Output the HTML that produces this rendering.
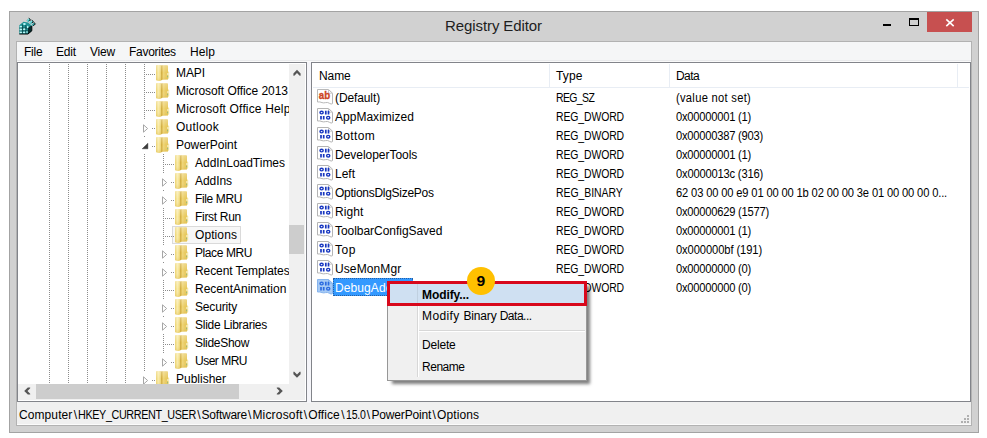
<!DOCTYPE html>
<html lang="en">
<head>
<meta charset="utf-8">
<title>Registry Editor</title>
<style>
html,body{margin:0;padding:0;background:#fff;}
body{width:987px;height:438px;position:relative;overflow:hidden;font-family:"Liberation Sans",sans-serif;font-size:12px;color:#000;}
.a{position:absolute;}
.t{position:absolute;white-space:pre;}
svg{position:absolute;overflow:visible;}
</style>
</head>
<body>
<div class="window">
<div class="a" style="left:9px;top:11px;width:970px;height:422px;background:#d1d1d1;box-sizing:border-box;border:1px solid #a3a3a3;"></div>
<div class="a" style="left:16px;top:41px;width:956px;height:385px;background:#f0f0f0;box-sizing:border-box;border:1px solid #b2b2b2;"></div>
<div class="titlebar">
<svg style="left:19px;top:18px" width="17" height="17" viewBox="0 0 17 17">
<path d="M0.3 7.2 L4.5 3.8 L9 4.6 L12.6 7.6 L12.6 13 L9 16 L0.3 16 Z" fill="#1f9496"/>
<path d="M9 9.5 L12.6 7.6 L12.6 13 L9 16 Z" fill="#062c2e"/>
<path d="M3.6 6.5 L3.6 15.5 M6.8 7 L6.8 15.5 M0.5 10.1 L8.8 10.1 M0.5 12.9 L9 12.9" stroke="#0a4446" stroke-width="0.8" fill="none"/>
<path d="M0.3 16 L9 16 L12.8 12.8 L12.8 8" stroke="#000" stroke-width="1" fill="none"/>
<g fill="#baf7f7">
<ellipse cx="1.9" cy="8.6" rx="1.2" ry="0.9"/><ellipse cx="5.4" cy="6" rx="1.4" ry="0.9"/>
<ellipse cx="1.9" cy="11.5" rx="1.2" ry="0.9"/><ellipse cx="5.2" cy="11.3" rx="1.2" ry="1"/>
<ellipse cx="1.9" cy="14.4" rx="1.2" ry="0.8"/><ellipse cx="5.1" cy="14.4" rx="1.2" ry="0.8"/><ellipse cx="8" cy="14" rx="0.9" ry="0.8"/>
<ellipse cx="8.7" cy="9" rx="0.8" ry="1.3"/>
</g>
<path d="M7.4 2.6 L9.8 0.2 L11.6 1.8 L9.4 4.2 Z" fill="#37b3b5"/>
<path d="M10.4 4.6 L12.8 2.2 L14.4 3.6 L12 6.2 Z" fill="#37b3b5"/>
<path d="M12.6 7 L14.8 4.4 L16.4 5.8 L14 8 Z" fill="#2a9fa1"/>
<path d="M9.8 0.2 L11.6 1.8 L10.4 3 M12.8 2.2 L14.4 3.6 L13.2 5 M14.8 4.4 L16.4 5.8 L14.2 8" stroke="#000" stroke-width="0.9" fill="none"/>
<path d="M8.4 2.4 L9.8 1 M11.2 4.6 L12.6 3.2" stroke="#c9fbfb" stroke-width="0.9" fill="none"/>
</svg>
<div class="a" style="left:927px;top:12px;width:45px;height:20px;background:#c75050;"></div>
<svg style="left:927px;top:12px" width="45" height="20" viewBox="0 0 45 20"><path d="M19.3 7.3 L26.7 14.2 M26.7 7.3 L19.3 14.2" stroke="#fff" stroke-width="1.6" fill="none"/></svg>
<div class="a" style="left:883px;top:24px;width:8px;height:2px;background:#000;"></div>
<div class="a" style="left:909px;top:18px;width:10px;height:8px;box-sizing:border-box;border:1px solid #000;border-top-width:2px;"></div>
<div class="t" style="left:445px;top:15px;line-height:22px;font-size:15px;letter-spacing:-0.09px;color:#1e1e1e;">Registry Editor</div>
</div>
<div class="menubar">
<div class="a" style="left:17px;top:42px;width:954px;height:20px;background:#f5f6f7;box-sizing:border-box;border-bottom:1px solid #fafafa;"></div>
<div class="a" style="left:17px;top:60px;width:954px;height:1px;background:#e9eaec;"></div>
<div class="t" style="left:24px;top:42px;line-height:20px;letter-spacing:-0.26px;">File</div>
<div class="t" style="left:56px;top:42px;line-height:20px;letter-spacing:-0.17px;">Edit</div>
<div class="t" style="left:90px;top:42px;line-height:20px;letter-spacing:-0.25px;">View</div>
<div class="t" style="left:129px;top:42px;line-height:20px;letter-spacing:-0.28px;">Favorites</div>
<div class="t" style="left:190px;top:42px;line-height:20px;letter-spacing:0.08px;">Help</div>
</div>
<svg width="0" height="0" style="left:0;top:0"><defs><linearGradient id="fg" x1="0" y1="0" x2="1" y2="0"><stop offset="0.042" stop-color="#efd87c"/><stop offset="0.125" stop-color="#f5e394"/><stop offset="0.208" stop-color="#f8eaa8"/><stop offset="0.292" stop-color="#f5e394"/><stop offset="0.375" stop-color="#efd87a"/><stop offset="0.458" stop-color="#d2ae44"/><stop offset="0.542" stop-color="#e2c256"/><stop offset="0.625" stop-color="#eed376"/><stop offset="0.708" stop-color="#ecd06c"/><stop offset="0.792" stop-color="#e9cb62"/><stop offset="0.875" stop-color="#e8c95e"/><stop offset="0.958" stop-color="#e6c658"/></linearGradient><linearGradient id="fv" x1="0" y1="0" x2="0" y2="1"><stop offset="0" stop-color="#fff" stop-opacity="0.3"/><stop offset="0.5" stop-color="#fff" stop-opacity="0"/><stop offset="1" stop-color="#c89a10" stop-opacity="0.25"/></linearGradient></defs></svg>
<div class="tree-pane">
<div class="a" style="left:17px;top:62px;width:290px;height:340px;background:#fff;box-sizing:border-box;border:1px solid #82848a;"></div>
<div class="a" style="left:49px;top:64px;width:1px;height:320px;background-image:linear-gradient(to bottom,#8c8c8c 50%,transparent 50%);background-size:1px 2px;"></div>
<div class="a" style="left:68px;top:64px;width:1px;height:320px;background-image:linear-gradient(to bottom,#8c8c8c 50%,transparent 50%);background-size:1px 2px;"></div>
<div class="a" style="left:87px;top:64px;width:1px;height:320px;background-image:linear-gradient(to bottom,#8c8c8c 50%,transparent 50%);background-size:1px 2px;"></div>
<div class="a" style="left:106px;top:64px;width:1px;height:320px;background-image:linear-gradient(to bottom,#8c8c8c 50%,transparent 50%);background-size:1px 2px;"></div>
<div class="a" style="left:125px;top:64px;width:1px;height:320px;background-image:linear-gradient(to bottom,#8c8c8c 50%,transparent 50%);background-size:1px 2px;"></div>
<div class="a" style="left:144px;top:64px;width:1px;height:320px;background-image:linear-gradient(to bottom,#8c8c8c 50%,transparent 50%);background-size:1px 2px;"></div>
<div class="a" style="left:163px;top:154px;width:1px;height:216px;background-image:linear-gradient(to bottom,#8c8c8c 50%,transparent 50%);background-size:1px 2px;"></div>
<div class="a" style="left:144px;top:74px;width:11px;height:1px;background-image:linear-gradient(to right,#8c8c8c 50%,transparent 50%);background-size:2px 1px;"></div>
<svg style="left:156px;top:65px" width="14" height="16" viewBox="0 0 14 16">
<path d="M12 6.2 L13.2 7 L13.2 13.2 L12 14 Z" fill="#f3e4a2"/>
<path d="M0 1 Q0 0 1 0 L4.6 0 L5.2 0.6 L6 0.2 L11 0.2 Q12 0.2 12 1.2 L12 14.6 L6 14.8 L5 15.6 Q3 16.2 1 15.6 Q0 15.4 0 14.6 Z" fill="url(#fg)"/>
<path d="M0 1 Q0 0 1 0 L4.6 0 L5.2 0.6 L6 0.2 L11 0.2 Q12 0.2 12 1.2 L12 14.6 L6 14.8 L5 15.6 Q3 16.2 1 15.6 Q0 15.4 0 14.6 Z" fill="url(#fv)"/>
<rect x="11.4" y="8" width="1" height="2" fill="#fbf6dc"/>
<rect x="11" y="10.8" width="1.1" height="1.5" fill="#9ab97c"/>
</svg>
<div class="t" style="left:176px;top:64px;line-height:18px;letter-spacing:-0.09px;">MAPI</div>
<div class="a" style="left:144px;top:92px;width:11px;height:1px;background-image:linear-gradient(to right,#8c8c8c 50%,transparent 50%);background-size:2px 1px;"></div>
<svg style="left:156px;top:83px" width="14" height="16" viewBox="0 0 14 16">
<path d="M12 6.2 L13.2 7 L13.2 13.2 L12 14 Z" fill="#f3e4a2"/>
<path d="M0 1 Q0 0 1 0 L4.6 0 L5.2 0.6 L6 0.2 L11 0.2 Q12 0.2 12 1.2 L12 14.6 L6 14.8 L5 15.6 Q3 16.2 1 15.6 Q0 15.4 0 14.6 Z" fill="url(#fg)"/>
<path d="M0 1 Q0 0 1 0 L4.6 0 L5.2 0.6 L6 0.2 L11 0.2 Q12 0.2 12 1.2 L12 14.6 L6 14.8 L5 15.6 Q3 16.2 1 15.6 Q0 15.4 0 14.6 Z" fill="url(#fv)"/>
<rect x="11.4" y="8" width="1" height="2" fill="#fbf6dc"/>
<rect x="11" y="10.8" width="1.1" height="1.5" fill="#9ab97c"/>
</svg>
<div class="t" style="left:176px;top:82px;line-height:18px;letter-spacing:-0.06px;">Microsoft Office 2013</div>
<div class="a" style="left:144px;top:110px;width:11px;height:1px;background-image:linear-gradient(to right,#8c8c8c 50%,transparent 50%);background-size:2px 1px;"></div>
<svg style="left:156px;top:101px" width="14" height="16" viewBox="0 0 14 16">
<path d="M12 6.2 L13.2 7 L13.2 13.2 L12 14 Z" fill="#f3e4a2"/>
<path d="M0 1 Q0 0 1 0 L4.6 0 L5.2 0.6 L6 0.2 L11 0.2 Q12 0.2 12 1.2 L12 14.6 L6 14.8 L5 15.6 Q3 16.2 1 15.6 Q0 15.4 0 14.6 Z" fill="url(#fg)"/>
<path d="M0 1 Q0 0 1 0 L4.6 0 L5.2 0.6 L6 0.2 L11 0.2 Q12 0.2 12 1.2 L12 14.6 L6 14.8 L5 15.6 Q3 16.2 1 15.6 Q0 15.4 0 14.6 Z" fill="url(#fv)"/>
<rect x="11.4" y="8" width="1" height="2" fill="#fbf6dc"/>
<rect x="11" y="10.8" width="1.1" height="1.5" fill="#9ab97c"/>
</svg>
<div class="t" style="left:176px;top:100px;line-height:18px;letter-spacing:0.16px;">Microsoft Office Help</div>
<div class="a" style="left:140px;top:119px;width:9px;height:16px;background:#fff;"></div>
<div class="a" style="left:152px;top:128px;width:3px;height:1px;background-image:linear-gradient(to right,#8c8c8c 50%,transparent 50%);background-size:2px 1px;"></div>
<svg style="left:143px;top:124px" width="6" height="10" viewBox="0 0 6 10"><path d="M0.5 0.8 L4.6 4.5 L0.5 8.2 Z" fill="#fff" stroke="#a6a6a6" stroke-width="1"/></svg>
<svg style="left:156px;top:119px" width="14" height="16" viewBox="0 0 14 16">
<path d="M12 6.2 L13.2 7 L13.2 13.2 L12 14 Z" fill="#f3e4a2"/>
<path d="M0 1 Q0 0 1 0 L4.6 0 L5.2 0.6 L6 0.2 L11 0.2 Q12 0.2 12 1.2 L12 14.6 L6 14.8 L5 15.6 Q3 16.2 1 15.6 Q0 15.4 0 14.6 Z" fill="url(#fg)"/>
<path d="M0 1 Q0 0 1 0 L4.6 0 L5.2 0.6 L6 0.2 L11 0.2 Q12 0.2 12 1.2 L12 14.6 L6 14.8 L5 15.6 Q3 16.2 1 15.6 Q0 15.4 0 14.6 Z" fill="url(#fv)"/>
<rect x="11.4" y="8" width="1" height="2" fill="#fbf6dc"/>
<rect x="11" y="10.8" width="1.1" height="1.5" fill="#9ab97c"/>
</svg>
<div class="t" style="left:176px;top:118px;line-height:18px;letter-spacing:0.23px;">Outlook</div>
<div class="a" style="left:140px;top:137px;width:9px;height:16px;background:#fff;"></div>
<div class="a" style="left:152px;top:146px;width:3px;height:1px;background-image:linear-gradient(to right,#8c8c8c 50%,transparent 50%);background-size:2px 1px;"></div>
<svg style="left:142px;top:143px" width="6" height="6" viewBox="0 0 6 6"><path d="M5.9 0.2 L5.9 5.8 L0.2 5.8 Z" fill="#3c3c3c" stroke="#262626" stroke-width="0.4"/></svg>
<svg style="left:156px;top:137px" width="14" height="16" viewBox="0 0 14 16">
<path d="M12 6.2 L13.2 7 L13.2 13.2 L12 14 Z" fill="#f3e4a2"/>
<path d="M0 1 Q0 0 1 0 L4.6 0 L5.2 0.6 L6 0.2 L11 0.2 Q12 0.2 12 1.2 L12 14.6 L6 14.8 L5 15.6 Q3 16.2 1 15.6 Q0 15.4 0 14.6 Z" fill="url(#fg)"/>
<path d="M0 1 Q0 0 1 0 L4.6 0 L5.2 0.6 L6 0.2 L11 0.2 Q12 0.2 12 1.2 L12 14.6 L6 14.8 L5 15.6 Q3 16.2 1 15.6 Q0 15.4 0 14.6 Z" fill="url(#fv)"/>
<rect x="11.4" y="8" width="1" height="2" fill="#fbf6dc"/>
<rect x="11" y="10.8" width="1.1" height="1.5" fill="#9ab97c"/>
</svg>
<div class="t" style="left:176px;top:136px;line-height:18px;letter-spacing:-0.04px;">PowerPoint</div>
<div class="a" style="left:163px;top:164px;width:11px;height:1px;background-image:linear-gradient(to right,#8c8c8c 50%,transparent 50%);background-size:2px 1px;"></div>
<svg style="left:175px;top:155px" width="14" height="16" viewBox="0 0 14 16">
<path d="M12 6.2 L13.2 7 L13.2 13.2 L12 14 Z" fill="#f3e4a2"/>
<path d="M0 1 Q0 0 1 0 L4.6 0 L5.2 0.6 L6 0.2 L11 0.2 Q12 0.2 12 1.2 L12 14.6 L6 14.8 L5 15.6 Q3 16.2 1 15.6 Q0 15.4 0 14.6 Z" fill="url(#fg)"/>
<path d="M0 1 Q0 0 1 0 L4.6 0 L5.2 0.6 L6 0.2 L11 0.2 Q12 0.2 12 1.2 L12 14.6 L6 14.8 L5 15.6 Q3 16.2 1 15.6 Q0 15.4 0 14.6 Z" fill="url(#fv)"/>
<rect x="11.4" y="8" width="1" height="2" fill="#fbf6dc"/>
<rect x="11" y="10.8" width="1.1" height="1.5" fill="#9ab97c"/>
</svg>
<div class="t" style="left:195px;top:154px;line-height:18px;letter-spacing:-0.02px;">AddInLoadTimes</div>
<div class="a" style="left:159px;top:173px;width:9px;height:16px;background:#fff;"></div>
<div class="a" style="left:171px;top:182px;width:3px;height:1px;background-image:linear-gradient(to right,#8c8c8c 50%,transparent 50%);background-size:2px 1px;"></div>
<svg style="left:162px;top:178px" width="6" height="10" viewBox="0 0 6 10"><path d="M0.5 0.8 L4.6 4.5 L0.5 8.2 Z" fill="#fff" stroke="#a6a6a6" stroke-width="1"/></svg>
<svg style="left:175px;top:173px" width="14" height="16" viewBox="0 0 14 16">
<path d="M12 6.2 L13.2 7 L13.2 13.2 L12 14 Z" fill="#f3e4a2"/>
<path d="M0 1 Q0 0 1 0 L4.6 0 L5.2 0.6 L6 0.2 L11 0.2 Q12 0.2 12 1.2 L12 14.6 L6 14.8 L5 15.6 Q3 16.2 1 15.6 Q0 15.4 0 14.6 Z" fill="url(#fg)"/>
<path d="M0 1 Q0 0 1 0 L4.6 0 L5.2 0.6 L6 0.2 L11 0.2 Q12 0.2 12 1.2 L12 14.6 L6 14.8 L5 15.6 Q3 16.2 1 15.6 Q0 15.4 0 14.6 Z" fill="url(#fv)"/>
<rect x="11.4" y="8" width="1" height="2" fill="#fbf6dc"/>
<rect x="11" y="10.8" width="1.1" height="1.5" fill="#9ab97c"/>
</svg>
<div class="t" style="left:195px;top:172px;line-height:18px;letter-spacing:-0.06px;">AddIns</div>
<div class="a" style="left:159px;top:191px;width:9px;height:16px;background:#fff;"></div>
<div class="a" style="left:171px;top:200px;width:3px;height:1px;background-image:linear-gradient(to right,#8c8c8c 50%,transparent 50%);background-size:2px 1px;"></div>
<svg style="left:162px;top:196px" width="6" height="10" viewBox="0 0 6 10"><path d="M0.5 0.8 L4.6 4.5 L0.5 8.2 Z" fill="#fff" stroke="#a6a6a6" stroke-width="1"/></svg>
<svg style="left:175px;top:191px" width="14" height="16" viewBox="0 0 14 16">
<path d="M12 6.2 L13.2 7 L13.2 13.2 L12 14 Z" fill="#f3e4a2"/>
<path d="M0 1 Q0 0 1 0 L4.6 0 L5.2 0.6 L6 0.2 L11 0.2 Q12 0.2 12 1.2 L12 14.6 L6 14.8 L5 15.6 Q3 16.2 1 15.6 Q0 15.4 0 14.6 Z" fill="url(#fg)"/>
<path d="M0 1 Q0 0 1 0 L4.6 0 L5.2 0.6 L6 0.2 L11 0.2 Q12 0.2 12 1.2 L12 14.6 L6 14.8 L5 15.6 Q3 16.2 1 15.6 Q0 15.4 0 14.6 Z" fill="url(#fv)"/>
<rect x="11.4" y="8" width="1" height="2" fill="#fbf6dc"/>
<rect x="11" y="10.8" width="1.1" height="1.5" fill="#9ab97c"/>
</svg>
<div class="t" style="left:195px;top:190px;line-height:18px;letter-spacing:-0.38px;">File MRU</div>
<div class="a" style="left:163px;top:218px;width:11px;height:1px;background-image:linear-gradient(to right,#8c8c8c 50%,transparent 50%);background-size:2px 1px;"></div>
<svg style="left:175px;top:209px" width="14" height="16" viewBox="0 0 14 16">
<path d="M12 6.2 L13.2 7 L13.2 13.2 L12 14 Z" fill="#f3e4a2"/>
<path d="M0 1 Q0 0 1 0 L4.6 0 L5.2 0.6 L6 0.2 L11 0.2 Q12 0.2 12 1.2 L12 14.6 L6 14.8 L5 15.6 Q3 16.2 1 15.6 Q0 15.4 0 14.6 Z" fill="url(#fg)"/>
<path d="M0 1 Q0 0 1 0 L4.6 0 L5.2 0.6 L6 0.2 L11 0.2 Q12 0.2 12 1.2 L12 14.6 L6 14.8 L5 15.6 Q3 16.2 1 15.6 Q0 15.4 0 14.6 Z" fill="url(#fv)"/>
<rect x="11.4" y="8" width="1" height="2" fill="#fbf6dc"/>
<rect x="11" y="10.8" width="1.1" height="1.5" fill="#9ab97c"/>
</svg>
<div class="t" style="left:195px;top:208px;line-height:18px;letter-spacing:-0.30px;">First Run</div>
<div class="a" style="left:172px;top:226px;width:69px;height:18px;box-sizing:border-box;border:1px solid #dadada;background:#f7f7f7;"></div>
<div class="a" style="left:163px;top:236px;width:11px;height:1px;background-image:linear-gradient(to right,#8c8c8c 50%,transparent 50%);background-size:2px 1px;"></div>
<svg style="left:175px;top:227px" width="14" height="16" viewBox="0 0 14 16">
<path d="M12 6.2 L13.2 7 L13.2 13.2 L12 14 Z" fill="#f3e4a2"/>
<path d="M0 1 Q0 0 1 0 L4.6 0 L5.2 0.6 L6 0.2 L11 0.2 Q12 0.2 12 1.2 L12 14.6 L6 14.8 L5 15.6 Q3 16.2 1 15.6 Q0 15.4 0 14.6 Z" fill="url(#fg)"/>
<path d="M0 1 Q0 0 1 0 L4.6 0 L5.2 0.6 L6 0.2 L11 0.2 Q12 0.2 12 1.2 L12 14.6 L6 14.8 L5 15.6 Q3 16.2 1 15.6 Q0 15.4 0 14.6 Z" fill="url(#fv)"/>
<rect x="11.4" y="8" width="1" height="2" fill="#fbf6dc"/>
<rect x="11" y="10.8" width="1.1" height="1.5" fill="#9ab97c"/>
</svg>
<div class="t" style="left:195px;top:226px;line-height:18px;letter-spacing:0.09px;">Options</div>
<div class="a" style="left:159px;top:245px;width:9px;height:16px;background:#fff;"></div>
<div class="a" style="left:171px;top:254px;width:3px;height:1px;background-image:linear-gradient(to right,#8c8c8c 50%,transparent 50%);background-size:2px 1px;"></div>
<svg style="left:162px;top:250px" width="6" height="10" viewBox="0 0 6 10"><path d="M0.5 0.8 L4.6 4.5 L0.5 8.2 Z" fill="#fff" stroke="#a6a6a6" stroke-width="1"/></svg>
<svg style="left:175px;top:245px" width="14" height="16" viewBox="0 0 14 16">
<path d="M12 6.2 L13.2 7 L13.2 13.2 L12 14 Z" fill="#f3e4a2"/>
<path d="M0 1 Q0 0 1 0 L4.6 0 L5.2 0.6 L6 0.2 L11 0.2 Q12 0.2 12 1.2 L12 14.6 L6 14.8 L5 15.6 Q3 16.2 1 15.6 Q0 15.4 0 14.6 Z" fill="url(#fg)"/>
<path d="M0 1 Q0 0 1 0 L4.6 0 L5.2 0.6 L6 0.2 L11 0.2 Q12 0.2 12 1.2 L12 14.6 L6 14.8 L5 15.6 Q3 16.2 1 15.6 Q0 15.4 0 14.6 Z" fill="url(#fv)"/>
<rect x="11.4" y="8" width="1" height="2" fill="#fbf6dc"/>
<rect x="11" y="10.8" width="1.1" height="1.5" fill="#9ab97c"/>
</svg>
<div class="t" style="left:195px;top:244px;line-height:18px;letter-spacing:-0.41px;">Place MRU</div>
<div class="a" style="left:159px;top:263px;width:9px;height:16px;background:#fff;"></div>
<div class="a" style="left:171px;top:272px;width:3px;height:1px;background-image:linear-gradient(to right,#8c8c8c 50%,transparent 50%);background-size:2px 1px;"></div>
<svg style="left:162px;top:268px" width="6" height="10" viewBox="0 0 6 10"><path d="M0.5 0.8 L4.6 4.5 L0.5 8.2 Z" fill="#fff" stroke="#a6a6a6" stroke-width="1"/></svg>
<svg style="left:175px;top:263px" width="14" height="16" viewBox="0 0 14 16">
<path d="M12 6.2 L13.2 7 L13.2 13.2 L12 14 Z" fill="#f3e4a2"/>
<path d="M0 1 Q0 0 1 0 L4.6 0 L5.2 0.6 L6 0.2 L11 0.2 Q12 0.2 12 1.2 L12 14.6 L6 14.8 L5 15.6 Q3 16.2 1 15.6 Q0 15.4 0 14.6 Z" fill="url(#fg)"/>
<path d="M0 1 Q0 0 1 0 L4.6 0 L5.2 0.6 L6 0.2 L11 0.2 Q12 0.2 12 1.2 L12 14.6 L6 14.8 L5 15.6 Q3 16.2 1 15.6 Q0 15.4 0 14.6 Z" fill="url(#fv)"/>
<rect x="11.4" y="8" width="1" height="2" fill="#fbf6dc"/>
<rect x="11" y="10.8" width="1.1" height="1.5" fill="#9ab97c"/>
</svg>
<div class="t" style="left:195px;top:262px;line-height:18px;letter-spacing:-0.08px;">Recent Templates</div>
<div class="a" style="left:163px;top:290px;width:11px;height:1px;background-image:linear-gradient(to right,#8c8c8c 50%,transparent 50%);background-size:2px 1px;"></div>
<svg style="left:175px;top:281px" width="14" height="16" viewBox="0 0 14 16">
<path d="M12 6.2 L13.2 7 L13.2 13.2 L12 14 Z" fill="#f3e4a2"/>
<path d="M0 1 Q0 0 1 0 L4.6 0 L5.2 0.6 L6 0.2 L11 0.2 Q12 0.2 12 1.2 L12 14.6 L6 14.8 L5 15.6 Q3 16.2 1 15.6 Q0 15.4 0 14.6 Z" fill="url(#fg)"/>
<path d="M0 1 Q0 0 1 0 L4.6 0 L5.2 0.6 L6 0.2 L11 0.2 Q12 0.2 12 1.2 L12 14.6 L6 14.8 L5 15.6 Q3 16.2 1 15.6 Q0 15.4 0 14.6 Z" fill="url(#fv)"/>
<rect x="11.4" y="8" width="1" height="2" fill="#fbf6dc"/>
<rect x="11" y="10.8" width="1.1" height="1.5" fill="#9ab97c"/>
</svg>
<div class="t" style="left:195px;top:280px;line-height:18px;">RecentAnimation</div>
<div class="a" style="left:159px;top:299px;width:9px;height:16px;background:#fff;"></div>
<div class="a" style="left:171px;top:308px;width:3px;height:1px;background-image:linear-gradient(to right,#8c8c8c 50%,transparent 50%);background-size:2px 1px;"></div>
<svg style="left:162px;top:304px" width="6" height="10" viewBox="0 0 6 10"><path d="M0.5 0.8 L4.6 4.5 L0.5 8.2 Z" fill="#fff" stroke="#a6a6a6" stroke-width="1"/></svg>
<svg style="left:175px;top:299px" width="14" height="16" viewBox="0 0 14 16">
<path d="M12 6.2 L13.2 7 L13.2 13.2 L12 14 Z" fill="#f3e4a2"/>
<path d="M0 1 Q0 0 1 0 L4.6 0 L5.2 0.6 L6 0.2 L11 0.2 Q12 0.2 12 1.2 L12 14.6 L6 14.8 L5 15.6 Q3 16.2 1 15.6 Q0 15.4 0 14.6 Z" fill="url(#fg)"/>
<path d="M0 1 Q0 0 1 0 L4.6 0 L5.2 0.6 L6 0.2 L11 0.2 Q12 0.2 12 1.2 L12 14.6 L6 14.8 L5 15.6 Q3 16.2 1 15.6 Q0 15.4 0 14.6 Z" fill="url(#fv)"/>
<rect x="11.4" y="8" width="1" height="2" fill="#fbf6dc"/>
<rect x="11" y="10.8" width="1.1" height="1.5" fill="#9ab97c"/>
</svg>
<div class="t" style="left:195px;top:298px;line-height:18px;letter-spacing:-0.17px;">Security</div>
<div class="a" style="left:159px;top:317px;width:9px;height:16px;background:#fff;"></div>
<div class="a" style="left:171px;top:326px;width:3px;height:1px;background-image:linear-gradient(to right,#8c8c8c 50%,transparent 50%);background-size:2px 1px;"></div>
<svg style="left:162px;top:322px" width="6" height="10" viewBox="0 0 6 10"><path d="M0.5 0.8 L4.6 4.5 L0.5 8.2 Z" fill="#fff" stroke="#a6a6a6" stroke-width="1"/></svg>
<svg style="left:175px;top:317px" width="14" height="16" viewBox="0 0 14 16">
<path d="M12 6.2 L13.2 7 L13.2 13.2 L12 14 Z" fill="#f3e4a2"/>
<path d="M0 1 Q0 0 1 0 L4.6 0 L5.2 0.6 L6 0.2 L11 0.2 Q12 0.2 12 1.2 L12 14.6 L6 14.8 L5 15.6 Q3 16.2 1 15.6 Q0 15.4 0 14.6 Z" fill="url(#fg)"/>
<path d="M0 1 Q0 0 1 0 L4.6 0 L5.2 0.6 L6 0.2 L11 0.2 Q12 0.2 12 1.2 L12 14.6 L6 14.8 L5 15.6 Q3 16.2 1 15.6 Q0 15.4 0 14.6 Z" fill="url(#fv)"/>
<rect x="11.4" y="8" width="1" height="2" fill="#fbf6dc"/>
<rect x="11" y="10.8" width="1.1" height="1.5" fill="#9ab97c"/>
</svg>
<div class="t" style="left:195px;top:316px;line-height:18px;letter-spacing:-0.27px;">Slide Libraries</div>
<div class="a" style="left:163px;top:344px;width:11px;height:1px;background-image:linear-gradient(to right,#8c8c8c 50%,transparent 50%);background-size:2px 1px;"></div>
<svg style="left:175px;top:335px" width="14" height="16" viewBox="0 0 14 16">
<path d="M12 6.2 L13.2 7 L13.2 13.2 L12 14 Z" fill="#f3e4a2"/>
<path d="M0 1 Q0 0 1 0 L4.6 0 L5.2 0.6 L6 0.2 L11 0.2 Q12 0.2 12 1.2 L12 14.6 L6 14.8 L5 15.6 Q3 16.2 1 15.6 Q0 15.4 0 14.6 Z" fill="url(#fg)"/>
<path d="M0 1 Q0 0 1 0 L4.6 0 L5.2 0.6 L6 0.2 L11 0.2 Q12 0.2 12 1.2 L12 14.6 L6 14.8 L5 15.6 Q3 16.2 1 15.6 Q0 15.4 0 14.6 Z" fill="url(#fv)"/>
<rect x="11.4" y="8" width="1" height="2" fill="#fbf6dc"/>
<rect x="11" y="10.8" width="1.1" height="1.5" fill="#9ab97c"/>
</svg>
<div class="t" style="left:195px;top:334px;line-height:18px;letter-spacing:-0.30px;">SlideShow</div>
<div class="a" style="left:159px;top:353px;width:9px;height:16px;background:#fff;"></div>
<div class="a" style="left:171px;top:362px;width:3px;height:1px;background-image:linear-gradient(to right,#8c8c8c 50%,transparent 50%);background-size:2px 1px;"></div>
<svg style="left:162px;top:358px" width="6" height="10" viewBox="0 0 6 10"><path d="M0.5 0.8 L4.6 4.5 L0.5 8.2 Z" fill="#fff" stroke="#a6a6a6" stroke-width="1"/></svg>
<svg style="left:175px;top:353px" width="14" height="16" viewBox="0 0 14 16">
<path d="M12 6.2 L13.2 7 L13.2 13.2 L12 14 Z" fill="#f3e4a2"/>
<path d="M0 1 Q0 0 1 0 L4.6 0 L5.2 0.6 L6 0.2 L11 0.2 Q12 0.2 12 1.2 L12 14.6 L6 14.8 L5 15.6 Q3 16.2 1 15.6 Q0 15.4 0 14.6 Z" fill="url(#fg)"/>
<path d="M0 1 Q0 0 1 0 L4.6 0 L5.2 0.6 L6 0.2 L11 0.2 Q12 0.2 12 1.2 L12 14.6 L6 14.8 L5 15.6 Q3 16.2 1 15.6 Q0 15.4 0 14.6 Z" fill="url(#fv)"/>
<rect x="11.4" y="8" width="1" height="2" fill="#fbf6dc"/>
<rect x="11" y="10.8" width="1.1" height="1.5" fill="#9ab97c"/>
</svg>
<div class="t" style="left:195px;top:352px;line-height:18px;letter-spacing:-0.50px;">User MRU</div>
<div class="a" style="left:140px;top:371px;width:9px;height:16px;background:#fff;"></div>
<div class="a" style="left:152px;top:380px;width:3px;height:1px;background-image:linear-gradient(to right,#8c8c8c 50%,transparent 50%);background-size:2px 1px;"></div>
<svg style="left:143px;top:376px" width="6" height="10" viewBox="0 0 6 10"><path d="M0.5 0.8 L4.6 4.5 L0.5 8.2 Z" fill="#fff" stroke="#a6a6a6" stroke-width="1"/></svg>
<svg style="left:156px;top:371px" width="14" height="16" viewBox="0 0 14 16">
<path d="M12 6.2 L13.2 7 L13.2 13.2 L12 14 Z" fill="#f3e4a2"/>
<path d="M0 1 Q0 0 1 0 L4.6 0 L5.2 0.6 L6 0.2 L11 0.2 Q12 0.2 12 1.2 L12 14.6 L6 14.8 L5 15.6 Q3 16.2 1 15.6 Q0 15.4 0 14.6 Z" fill="url(#fg)"/>
<path d="M0 1 Q0 0 1 0 L4.6 0 L5.2 0.6 L6 0.2 L11 0.2 Q12 0.2 12 1.2 L12 14.6 L6 14.8 L5 15.6 Q3 16.2 1 15.6 Q0 15.4 0 14.6 Z" fill="url(#fv)"/>
<rect x="11.4" y="8" width="1" height="2" fill="#fbf6dc"/>
<rect x="11" y="10.8" width="1.1" height="1.5" fill="#9ab97c"/>
</svg>
<div class="t" style="left:176px;top:370px;line-height:18px;letter-spacing:-0.00px;">Publisher</div>
<div class="a" style="left:289px;top:63px;width:17px;height:321px;background:#fff;"></div>
<div class="a" style="left:289px;top:64px;width:16px;height:320px;background:#f0f0f0;"></div>
<div class="a" style="left:289px;top:225px;width:15px;height:29px;background:#cdcdcd;"></div>
<div class="a" style="left:18px;top:384px;width:288px;height:17px;background:#f0f0f0;"></div>
<div class="a" style="left:36px;top:384px;width:203px;height:15px;background:#cdcdcd;"></div>
<div class="a" style="left:305px;top:63px;width:1px;height:338px;background:#fff;"></div>
<div class="a" style="left:18px;top:400px;width:288px;height:1px;background:#fff;"></div>
<div class="a" style="left:307px;top:62px;width:4px;height:341px;background:#f5f5f9;"></div>
<svg style="left:292.5px;top:69px" width="8" height="8" viewBox="0 0 8 8"><polygon points="0.4,4.4 4,0.8 7.6,4.4 7.6,6.8 6.7,6.8 4,4.1 1.3,6.8 0.4,6.8" fill="#555"/></svg>
<svg style="left:292.5px;top:371.2px" width="8" height="8" viewBox="0 0 8 8"><polygon points="0.4,3.2 4,6.8 7.6,3.2 7.6,0.8 6.7,0.8 4,3.5 1.3,0.8 0.4,0.8" fill="#555"/></svg>
<svg style="left:276.2px;top:387.4px" width="8" height="8" viewBox="0 0 8 8"><polygon points="3.2,0.4 6.8,4 3.2,7.6 0.8,7.6 0.8,6.7 3.5,4 0.8,1.3 0.8,0.4" fill="#555"/></svg>
<svg style="left:22.8px;top:387.4px" width="8" height="8" viewBox="0 0 8 8"><polygon points="4.8,0.4 1.2,4 4.8,7.6 7.2,7.6 7.2,6.7 4.5,4 7.2,1.3 7.2,0.4" fill="#555"/></svg>
</div>
<div class="list-pane">
<div class="a" style="left:311px;top:62px;width:660px;height:340px;background:#fff;box-sizing:border-box;border:1px solid #82848a;"></div>
<div class="a" style="left:313px;top:87px;width:656px;height:1px;background:#e8edf4;"></div>
<div class="a" style="left:549px;top:64px;width:1px;height:23px;background:#e8edf4;"></div>
<div class="a" style="left:669px;top:64px;width:1px;height:23px;background:#e8edf4;"></div>
<div class="a" style="left:957px;top:64px;width:1px;height:23px;background:#e8edf4;"></div>
<div class="t" style="left:319px;top:66px;line-height:20px;letter-spacing:-0.08px;">Name</div>
<div class="t" style="left:556px;top:66px;line-height:20px;letter-spacing:0.17px;">Type</div>
<div class="t" style="left:676px;top:66px;line-height:20px;letter-spacing:-0.59px;">Data</div>
<svg style="left:317px;top:89px" width="16" height="16" viewBox="0 0 16 16">
<path d="M0.5 0.5 L11.5 0.5 L15.5 4.2 L15.5 14.6 Q14.2 15.6 12.6 14.4 Q10.8 13 8.6 13.6 Q6.6 14.2 5 13.6 Q3 12.6 0.5 13 Z" fill="#fff" stroke="#b9b9b9" stroke-width="1"/>
<path d="M11.5 0.5 L11.5 4.2 L15.5 4.2" fill="none" stroke="#c8c8c8" stroke-width="1"/>
<text x="2.1" y="10" transform="scale(0.88,1)" style="font-family:'Liberation Sans',sans-serif;font-size:11px;font-weight:bold" fill="#cc4524" stroke="#cc4524" stroke-width="0.35">ab</text>
</svg>
<div class="t" style="left:335px;top:89px;line-height:19px;letter-spacing:-0.11px;">(Default)</div>
<div class="t" style="left:556px;top:89px;line-height:19px;letter-spacing:-0.67px;transform:scaleX(0.87);transform-origin:0 50%;">REG_SZ</div>
<div class="t" style="left:676px;top:89px;line-height:19px;letter-spacing:0.31px;transform:scaleX(0.93);transform-origin:0 50%;">(value not set)</div>
<svg style="left:317px;top:108px" width="16" height="16" viewBox="0 0 16 16">
<path d="M0.5 0.5 L11.5 0.5 L15.5 4.2 L15.5 14.6 Q14.2 15.6 12.6 14.4 Q10.8 13 8.6 13.6 Q6.6 14.2 5 13.6 Q3 12.6 0.5 13 Z" fill="#fff" stroke="#b4b4b4" stroke-width="1"/>
<path d="M11.5 0.5 L11.5 4.2 L15.5 4.2" fill="none" stroke="#c8c8c8" stroke-width="1"/>
<g fill="none" stroke="#1736c0" stroke-width="1.7">
<ellipse cx="4.6" cy="4.6" rx="1.6" ry="1.3" stroke-width="1.4"/>
<path d="M8.8 2.8 V6.4 M11.5 2.8 V6.4"/>
<path d="M4 8 V11.4 M6.7 8 V11.4"/>
<ellipse cx="11.2" cy="9.7" rx="1.6" ry="1.3" stroke-width="1.4"/>
</g>
</svg>
<div class="t" style="left:335px;top:108px;line-height:19px;letter-spacing:0.02px;">AppMaximized</div>
<div class="t" style="left:556px;top:108px;line-height:19px;letter-spacing:-0.13px;transform:scaleX(0.87);transform-origin:0 50%;">REG_DWORD</div>
<div class="t" style="left:676px;top:108px;line-height:19px;letter-spacing:-0.25px;transform:scaleX(0.93);transform-origin:0 50%;">0x00000001 (1)</div>
<svg style="left:317px;top:127px" width="16" height="16" viewBox="0 0 16 16">
<path d="M0.5 0.5 L11.5 0.5 L15.5 4.2 L15.5 14.6 Q14.2 15.6 12.6 14.4 Q10.8 13 8.6 13.6 Q6.6 14.2 5 13.6 Q3 12.6 0.5 13 Z" fill="#fff" stroke="#b4b4b4" stroke-width="1"/>
<path d="M11.5 0.5 L11.5 4.2 L15.5 4.2" fill="none" stroke="#c8c8c8" stroke-width="1"/>
<g fill="none" stroke="#1736c0" stroke-width="1.7">
<ellipse cx="4.6" cy="4.6" rx="1.6" ry="1.3" stroke-width="1.4"/>
<path d="M8.8 2.8 V6.4 M11.5 2.8 V6.4"/>
<path d="M4 8 V11.4 M6.7 8 V11.4"/>
<ellipse cx="11.2" cy="9.7" rx="1.6" ry="1.3" stroke-width="1.4"/>
</g>
</svg>
<div class="t" style="left:335px;top:127px;line-height:19px;letter-spacing:0.33px;">Bottom</div>
<div class="t" style="left:556px;top:127px;line-height:19px;letter-spacing:-0.13px;transform:scaleX(0.87);transform-origin:0 50%;">REG_DWORD</div>
<div class="t" style="left:676px;top:127px;line-height:19px;letter-spacing:-0.24px;transform:scaleX(0.93);transform-origin:0 50%;">0x00000387 (903)</div>
<svg style="left:317px;top:146px" width="16" height="16" viewBox="0 0 16 16">
<path d="M0.5 0.5 L11.5 0.5 L15.5 4.2 L15.5 14.6 Q14.2 15.6 12.6 14.4 Q10.8 13 8.6 13.6 Q6.6 14.2 5 13.6 Q3 12.6 0.5 13 Z" fill="#fff" stroke="#b4b4b4" stroke-width="1"/>
<path d="M11.5 0.5 L11.5 4.2 L15.5 4.2" fill="none" stroke="#c8c8c8" stroke-width="1"/>
<g fill="none" stroke="#1736c0" stroke-width="1.7">
<ellipse cx="4.6" cy="4.6" rx="1.6" ry="1.3" stroke-width="1.4"/>
<path d="M8.8 2.8 V6.4 M11.5 2.8 V6.4"/>
<path d="M4 8 V11.4 M6.7 8 V11.4"/>
<ellipse cx="11.2" cy="9.7" rx="1.6" ry="1.3" stroke-width="1.4"/>
</g>
</svg>
<div class="t" style="left:335px;top:146px;line-height:19px;letter-spacing:-0.03px;">DeveloperTools</div>
<div class="t" style="left:556px;top:146px;line-height:19px;letter-spacing:-0.13px;transform:scaleX(0.87);transform-origin:0 50%;">REG_DWORD</div>
<div class="t" style="left:676px;top:146px;line-height:19px;letter-spacing:-0.25px;transform:scaleX(0.93);transform-origin:0 50%;">0x00000001 (1)</div>
<svg style="left:317px;top:165px" width="16" height="16" viewBox="0 0 16 16">
<path d="M0.5 0.5 L11.5 0.5 L15.5 4.2 L15.5 14.6 Q14.2 15.6 12.6 14.4 Q10.8 13 8.6 13.6 Q6.6 14.2 5 13.6 Q3 12.6 0.5 13 Z" fill="#fff" stroke="#b4b4b4" stroke-width="1"/>
<path d="M11.5 0.5 L11.5 4.2 L15.5 4.2" fill="none" stroke="#c8c8c8" stroke-width="1"/>
<g fill="none" stroke="#1736c0" stroke-width="1.7">
<ellipse cx="4.6" cy="4.6" rx="1.6" ry="1.3" stroke-width="1.4"/>
<path d="M8.8 2.8 V6.4 M11.5 2.8 V6.4"/>
<path d="M4 8 V11.4 M6.7 8 V11.4"/>
<ellipse cx="11.2" cy="9.7" rx="1.6" ry="1.3" stroke-width="1.4"/>
</g>
</svg>
<div class="t" style="left:335px;top:165px;line-height:19px;letter-spacing:-0.00px;">Left</div>
<div class="t" style="left:556px;top:165px;line-height:19px;letter-spacing:-0.13px;transform:scaleX(0.87);transform-origin:0 50%;">REG_DWORD</div>
<div class="t" style="left:676px;top:165px;line-height:19px;letter-spacing:-0.20px;transform:scaleX(0.93);transform-origin:0 50%;">0x0000013c (316)</div>
<svg style="left:317px;top:184px" width="16" height="16" viewBox="0 0 16 16">
<path d="M0.5 0.5 L11.5 0.5 L15.5 4.2 L15.5 14.6 Q14.2 15.6 12.6 14.4 Q10.8 13 8.6 13.6 Q6.6 14.2 5 13.6 Q3 12.6 0.5 13 Z" fill="#fff" stroke="#b4b4b4" stroke-width="1"/>
<path d="M11.5 0.5 L11.5 4.2 L15.5 4.2" fill="none" stroke="#c8c8c8" stroke-width="1"/>
<g fill="none" stroke="#1736c0" stroke-width="1.7">
<ellipse cx="4.6" cy="4.6" rx="1.6" ry="1.3" stroke-width="1.4"/>
<path d="M8.8 2.8 V6.4 M11.5 2.8 V6.4"/>
<path d="M4 8 V11.4 M6.7 8 V11.4"/>
<ellipse cx="11.2" cy="9.7" rx="1.6" ry="1.3" stroke-width="1.4"/>
</g>
</svg>
<div class="t" style="left:335px;top:184px;line-height:19px;letter-spacing:-0.28px;">OptionsDlgSizePos</div>
<div class="t" style="left:556px;top:184px;line-height:19px;letter-spacing:-0.05px;transform:scaleX(0.87);transform-origin:0 50%;">REG_BINARY</div>
<div class="t" style="left:676px;top:184px;line-height:19px;letter-spacing:-0.16px;transform:scaleX(0.93);transform-origin:0 50%;">62 03 00 00 e9 01 00 00 1b 02 00 00 3e 01 00 00 00 0...</div>
<svg style="left:317px;top:203px" width="16" height="16" viewBox="0 0 16 16">
<path d="M0.5 0.5 L11.5 0.5 L15.5 4.2 L15.5 14.6 Q14.2 15.6 12.6 14.4 Q10.8 13 8.6 13.6 Q6.6 14.2 5 13.6 Q3 12.6 0.5 13 Z" fill="#fff" stroke="#b4b4b4" stroke-width="1"/>
<path d="M11.5 0.5 L11.5 4.2 L15.5 4.2" fill="none" stroke="#c8c8c8" stroke-width="1"/>
<g fill="none" stroke="#1736c0" stroke-width="1.7">
<ellipse cx="4.6" cy="4.6" rx="1.6" ry="1.3" stroke-width="1.4"/>
<path d="M8.8 2.8 V6.4 M11.5 2.8 V6.4"/>
<path d="M4 8 V11.4 M6.7 8 V11.4"/>
<ellipse cx="11.2" cy="9.7" rx="1.6" ry="1.3" stroke-width="1.4"/>
</g>
</svg>
<div class="t" style="left:335px;top:203px;line-height:19px;letter-spacing:0.06px;">Right</div>
<div class="t" style="left:556px;top:203px;line-height:19px;letter-spacing:-0.13px;transform:scaleX(0.87);transform-origin:0 50%;">REG_DWORD</div>
<div class="t" style="left:676px;top:203px;line-height:19px;letter-spacing:-0.24px;transform:scaleX(0.93);transform-origin:0 50%;">0x00000629 (1577)</div>
<svg style="left:317px;top:222px" width="16" height="16" viewBox="0 0 16 16">
<path d="M0.5 0.5 L11.5 0.5 L15.5 4.2 L15.5 14.6 Q14.2 15.6 12.6 14.4 Q10.8 13 8.6 13.6 Q6.6 14.2 5 13.6 Q3 12.6 0.5 13 Z" fill="#fff" stroke="#b4b4b4" stroke-width="1"/>
<path d="M11.5 0.5 L11.5 4.2 L15.5 4.2" fill="none" stroke="#c8c8c8" stroke-width="1"/>
<g fill="none" stroke="#1736c0" stroke-width="1.7">
<ellipse cx="4.6" cy="4.6" rx="1.6" ry="1.3" stroke-width="1.4"/>
<path d="M8.8 2.8 V6.4 M11.5 2.8 V6.4"/>
<path d="M4 8 V11.4 M6.7 8 V11.4"/>
<ellipse cx="11.2" cy="9.7" rx="1.6" ry="1.3" stroke-width="1.4"/>
</g>
</svg>
<div class="t" style="left:335px;top:222px;line-height:19px;letter-spacing:-0.04px;">ToolbarConfigSaved</div>
<div class="t" style="left:556px;top:222px;line-height:19px;letter-spacing:-0.13px;transform:scaleX(0.87);transform-origin:0 50%;">REG_DWORD</div>
<div class="t" style="left:676px;top:222px;line-height:19px;letter-spacing:-0.25px;transform:scaleX(0.93);transform-origin:0 50%;">0x00000001 (1)</div>
<svg style="left:317px;top:241px" width="16" height="16" viewBox="0 0 16 16">
<path d="M0.5 0.5 L11.5 0.5 L15.5 4.2 L15.5 14.6 Q14.2 15.6 12.6 14.4 Q10.8 13 8.6 13.6 Q6.6 14.2 5 13.6 Q3 12.6 0.5 13 Z" fill="#fff" stroke="#b4b4b4" stroke-width="1"/>
<path d="M11.5 0.5 L11.5 4.2 L15.5 4.2" fill="none" stroke="#c8c8c8" stroke-width="1"/>
<g fill="none" stroke="#1736c0" stroke-width="1.7">
<ellipse cx="4.6" cy="4.6" rx="1.6" ry="1.3" stroke-width="1.4"/>
<path d="M8.8 2.8 V6.4 M11.5 2.8 V6.4"/>
<path d="M4 8 V11.4 M6.7 8 V11.4"/>
<ellipse cx="11.2" cy="9.7" rx="1.6" ry="1.3" stroke-width="1.4"/>
</g>
</svg>
<div class="t" style="left:335px;top:241px;line-height:19px;letter-spacing:0.55px;">Top</div>
<div class="t" style="left:556px;top:241px;line-height:19px;letter-spacing:-0.13px;transform:scaleX(0.87);transform-origin:0 50%;">REG_DWORD</div>
<div class="t" style="left:676px;top:241px;line-height:19px;letter-spacing:-0.10px;transform:scaleX(0.93);transform-origin:0 50%;">0x000000bf (191)</div>
<svg style="left:317px;top:260px" width="16" height="16" viewBox="0 0 16 16">
<path d="M0.5 0.5 L11.5 0.5 L15.5 4.2 L15.5 14.6 Q14.2 15.6 12.6 14.4 Q10.8 13 8.6 13.6 Q6.6 14.2 5 13.6 Q3 12.6 0.5 13 Z" fill="#fff" stroke="#b4b4b4" stroke-width="1"/>
<path d="M11.5 0.5 L11.5 4.2 L15.5 4.2" fill="none" stroke="#c8c8c8" stroke-width="1"/>
<g fill="none" stroke="#1736c0" stroke-width="1.7">
<ellipse cx="4.6" cy="4.6" rx="1.6" ry="1.3" stroke-width="1.4"/>
<path d="M8.8 2.8 V6.4 M11.5 2.8 V6.4"/>
<path d="M4 8 V11.4 M6.7 8 V11.4"/>
<ellipse cx="11.2" cy="9.7" rx="1.6" ry="1.3" stroke-width="1.4"/>
</g>
</svg>
<div class="t" style="left:335px;top:260px;line-height:19px;letter-spacing:0.10px;">UseMonMgr</div>
<div class="t" style="left:556px;top:260px;line-height:19px;letter-spacing:-0.13px;transform:scaleX(0.87);transform-origin:0 50%;">REG_DWORD</div>
<div class="t" style="left:676px;top:260px;line-height:19px;letter-spacing:-0.25px;transform:scaleX(0.93);transform-origin:0 50%;">0x00000000 (0)</div>
<div class="a" style="left:333px;top:278px;width:80px;height:18px;background:#3399ff;box-sizing:border-box;border:1px dotted rgba(30,50,90,0.55);"></div>
<svg style="left:317px;top:279px" width="16" height="16" viewBox="0 0 16 16">
<path d="M0.5 0.5 L11.5 0.5 L15.5 4.2 L15.5 14.6 Q14.2 15.6 12.6 14.4 Q10.8 13 8.6 13.6 Q6.6 14.2 5 13.6 Q3 12.6 0.5 13 Z" fill="#a6caf5" stroke="#86b4ee" stroke-width="1"/>
<path d="M11.5 0.5 L11.5 4.2 L15.5 4.2" fill="none" stroke="#86b4ee" stroke-width="1"/>
<g fill="none" stroke="#2c6be0" stroke-width="1.7">
<ellipse cx="4.6" cy="4.6" rx="1.6" ry="1.3" stroke-width="1.4"/>
<path d="M8.8 2.8 V6.4 M11.5 2.8 V6.4"/>
<path d="M4 8 V11.4 M6.7 8 V11.4"/>
<ellipse cx="11.2" cy="9.7" rx="1.6" ry="1.3" stroke-width="1.4"/>
</g>
</svg>
<div class="t" style="left:335px;top:279px;line-height:19px;letter-spacing:0.09px;color:#fff;">DebugAddin</div>
<div class="t" style="left:556px;top:279px;line-height:19px;letter-spacing:-0.13px;transform:scaleX(0.87);transform-origin:0 50%;">REG_DWORD</div>
<div class="t" style="left:676px;top:279px;line-height:19px;letter-spacing:-0.25px;transform:scaleX(0.93);transform-origin:0 50%;">0x00000000 (0)</div>
</div>
<div class="statusbar">
<div class="a" style="left:17px;top:424px;width:954px;height:1px;background:#fbfbfb;"></div>
<div class="t" style="left:19px;top:406px;line-height:18px;"><span style="letter-spacing:0.09px">Computer</span><span style="padding:0 1.28px">\</span><span style="display:inline-block;letter-spacing:-0.42px;transform:scaleX(0.9);transform-origin:0 50%;margin-right:-13.09px">HKEY_CURRENT_USER</span><span style="padding:0 1.08px">\</span><span style="letter-spacing:-0.24px">Software</span><span style="padding:0 1.03px">\</span><span style="letter-spacing:0.18px">Microsoft</span><span style="padding:0 1.08px">\</span><span style="letter-spacing:0.08px">Office</span><span style="padding:0 1.43px">\</span><span style="display:inline-block;letter-spacing:-0.27px;transform:scaleX(0.88);transform-origin:0 50%;margin-right:-2.67px">15.0</span><span style="padding:0 1.23px">\</span><span style="letter-spacing:-0.15px">PowerPoint</span><span style="padding:0 1.18px">\</span><span style="letter-spacing:0.12px">Options</span></div>
<div class="a" style="left:967px;top:415px;width:2px;height:2px;background:#b0b0b0;"></div>
<div class="a" style="left:964px;top:418px;width:2px;height:2px;background:#b0b0b0;"></div>
<div class="a" style="left:967px;top:418px;width:2px;height:2px;background:#b0b0b0;"></div>
<div class="a" style="left:961px;top:421px;width:2px;height:2px;background:#b0b0b0;"></div>
<div class="a" style="left:964px;top:421px;width:2px;height:2px;background:#b0b0b0;"></div>
<div class="a" style="left:967px;top:421px;width:2px;height:2px;background:#b0b0b0;"></div>
</div>
</div>
<div class="context-menu">
<div class="a" style="left:387px;top:281px;width:200px;height:100px;background:#f0f0f0;box-sizing:border-box;border:1px solid #979797;box-shadow:4px 4px 3px -1px rgba(0,0,0,0.5);"></div>
<div class="a" style="left:417px;top:284px;width:1px;height:93px;background:#d7d7d7;"></div>
<div class="a" style="left:418px;top:284px;width:1px;height:93px;background:#fff;"></div>
<div class="a" style="left:419px;top:330px;width:166px;height:1px;background:#d7d7d7;"></div>
<div class="a" style="left:419px;top:331px;width:166px;height:1px;background:#fff;"></div>
<div class="a" style="left:387px;top:281px;width:200px;height:25px;box-sizing:border-box;border:3px solid #d8081c;background:#cfe0f2;"></div>
<div class="a" style="left:417px;top:284px;width:1px;height:19px;background:#c0d0e0;"></div>
<div class="a" style="left:467px;top:267px;width:28px;height:28px;border-radius:50%;background:#ffc000;"></div>
<div class="t" style="left:422px;top:284px;line-height:22px;letter-spacing:-0.09px;font-weight:bold;">Modify...</div>
<div class="t" style="left:422px;top:305px;line-height:22px;"><span style="letter-spacing:0.40px">Modify </span><span style="letter-spacing:-0.17px">Binary </span><span style="letter-spacing:-0.48px">Data...</span></div>
<div class="t" style="left:422px;top:334px;line-height:22px;letter-spacing:-0.20px;">Delete</div>
<div class="t" style="left:422px;top:356px;line-height:22px;letter-spacing:-0.48px;">Rename</div>
<div class="t" style="left:476.6px;top:271px;line-height:20px;font-size:14px;font-weight:bold;transform:scaleX(1.12);transform-origin:50% 50%;">9</div>
</div>
</body>
</html>
